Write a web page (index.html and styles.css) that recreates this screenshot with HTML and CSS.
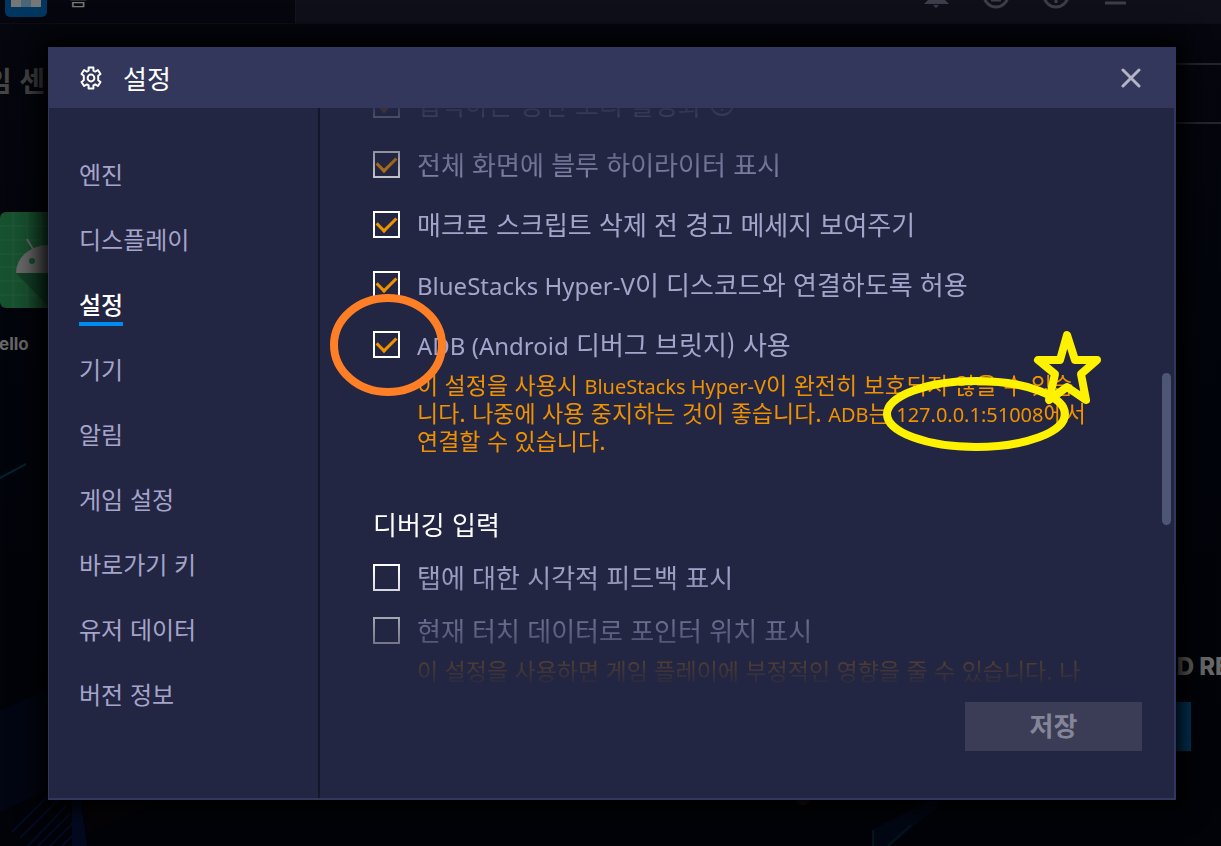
FILE: index.html
```html
<!DOCTYPE html>
<html lang="ko">
<head>
  <meta charset="UTF-8"/>
  <meta name="viewport" content="width=device-width, initial-scale=1.0"/>
  <title>설정</title>
  <link rel="stylesheet" href="styles.css">
</head>
<body>
  <!-- dimmed home screen -->
  <div class="home">
    <svg class="wallpaper" aria-hidden="true">
      <path d="M0 710 L48 690 V790 L0 812 Z" fill="#020613"/>
      <path d="M0 478 L26 464" stroke="#04222c" stroke-width="2"/>
      <path d="M12 832 L48 796 M20 838 L58 800 M28 846 L66 806 M38 846 L70 814 M50 846 L73 823 M62 846 L74 834" stroke="#020b24" stroke-width="2"/>
      <path d="M72 800 H81 L87 846 H72 Z" fill="#030a20"/>
      <path d="M81 800 H160 L87 834 Z" fill="#050307"/>
      <circle cx="803" cy="797" r="8" fill="#1c1211"/>
      <path d="M872 846 V830 L930 800 H946 L890 846 Z" fill="#020714"/>
      <path d="M888 846 L911 825 M873 846 V830" stroke="#03151f" stroke-width="2" fill="none"/>
    </svg>

    <header class="topbar">
      <div class="tab">
        <svg class="tab-icon" width="42" height="17" aria-hidden="true">
          <rect x="0" y="-20" width="42" height="37" rx="5" fill="#00365f"/>
          <rect x="6" y="-4" width="30" height="11" fill="#777"/>
          <rect x="16" y="-4" width="10" height="11" fill="#4a6478"/>
        </svg>
        <span>홈</span>
      </div>
      <svg class="top-icons" width="206" height="12" aria-hidden="true">
        <path d="M0 4 L4 0 H21 L25 4 Z M9 5 H15 L12 8 Z" fill="#3d3d49"/>
        <g fill="none" stroke="#3d3d49" stroke-width="3">
          <circle cx="72" cy="-5" r="12"/>
          <path d="M67 0 H77"/>
          <circle cx="132" cy="-5" r="12"/>
          <path d="M132 -1 V3"/>
          <path d="M181 3 H202"/>
        </g>
      </svg>
    </header>

    <div class="home-main">
      <div class="apps">
        <h2>임 센</h2>
        <svg class="app-icon" width="96" height="96" viewBox="0 0 96 96" aria-hidden="true">
          <rect width="96" height="96" rx="6" fill="#17522f"/>
          <path d="M0 14 H96 M0 28 H96 M0 42 H96 M0 55 H96 M0 69 H96 M0 83 H96 M13 0 V96 M27 0 V96 M41 0 V96 M55 0 V96" stroke="#25593a" fill="none"/>
          <path d="M16 61 L50 96 H96 V61 Z" fill="#123f27"/>
          <path d="M16 61 A32 28 0 0 1 80 61 Z" fill="#686868"/>
          <path d="M27 27 L33 37" stroke="#686868" stroke-width="2"/>
          <circle cx="32" cy="49" r="3" fill="#17522f"/>
        </svg>
        <p>ello</p>
      </div>
      <div class="promo">
        <div class="search-box"></div>
        <h3>ED RE</h3>
        <div class="promo-bar"></div>
      </div>
    </div>
  </div>

  <div class="overlay">
    <section class="dialog" role="dialog" aria-labelledby="dialog-title">
      <header class="dialog-header">
        <svg width="24" height="24" viewBox="0 0 24 24" fill="none" stroke="#fff" stroke-width="2" stroke-linejoin="round" aria-hidden="true">
          <path d="M9.6 1.6h4.8v3l1.8 1 2.7-1.6 2.6 4-2.3 1.7v4.6l2.3 1.7-2.6 4-2.7-1.6-1.8 1v3H9.6v-3l-1.8-1L5.1 20l-2.6-4 2.3-1.7V9.7L2.5 8l2.6-4 2.7 1.6 1.8-1z"/>
          <circle cx="12" cy="12" r="3.4"/>
        </svg>
        <h1 id="dialog-title">설정</h1>
        <button class="close-btn" aria-label="닫기">
          <svg width="20" height="20" viewBox="0 0 20 20" stroke="#b4b4c6" stroke-width="3" stroke-linecap="round" aria-hidden="true">
            <path d="M2 2 L18 18 M18 2 L2 18"/>
          </svg>
        </button>
      </header>

      <div class="dialog-body">
        <nav class="sidebar">
          <a href="#">엔진</a>
          <a href="#">디스플레이</a>
          <a href="#" class="active">설정</a>
          <a href="#">기기</a>
          <a href="#">알림</a>
          <a href="#">게임 설정</a>
          <a href="#">바로가기 키</a>
          <a href="#">유저 데이터</a>
          <a href="#">버전 정보</a>
        </nav>

        <div class="content">
          <div class="scroll-area">
            <form class="options">
              <div class="group">
                <label class="option">
                  <input type="checkbox" checked>
                  <span>입력하는 동안 소리 활성화</span>
                  <svg class="info" width="24" height="24" viewBox="0 0 24 24" fill="none" stroke="currentColor" stroke-width="2" aria-hidden="true">
                    <circle cx="12" cy="12" r="11"/>
                    <path d="M12 5v9M12 17v2"/>
                  </svg>
                </label>
                <label class="option"><input type="checkbox" checked><span>전체 화면에 블루 하이라이터 표시</span></label>
                <label class="option"><input type="checkbox" checked><span>매크로 스크립트 삭제 전 경고 메세지 보여주기</span></label>
                <label class="option"><input type="checkbox" checked><span><span class="en">BlueStacks Hyper-V</span>이 디스코드와 연결하도록 허용</span></label>
                <label class="option"><input type="checkbox" checked><span><span class="en">ADB (Android</span> 디버그 브릿지) 사용</span></label>
              </div>
              <p class="note">이 설정을 사용시 <span class="en">BlueStacks Hyper-V</span>이 완전히 보호되지 않을 수 있습<br>니다. 나중에 사용 중지하는 것이 좋습니다. <span class="en">ADB</span>는 <span class="en">127.0.0.1:51008</span>에서<br>연결할 수 있습니다.</p>

              <h2>디버깅 입력</h2>
              <div class="group debug">
                <label class="option"><input type="checkbox"><span>탭에 대한 시각적 피드백 표시</span></label>
                <label class="option"><input type="checkbox"><span>현재 터치 데이터로 포인터 위치 표시</span></label>
              </div>
              <p class="note">이 설정을 사용하면 게임 플레이에 부정적인 영향을 줄 수 있습니다. 나</p>
            </form>
            <div class="scrollbar"><div class="thumb"></div></div>
          </div>
          <footer class="dialog-footer">
            <button class="save-btn" disabled>저장</button>
          </footer>
        </div>
      </div>
    </section>
  </div>

  <!-- hand-drawn marks -->
  <svg class="marks" fill="none" stroke-width="8" stroke-linejoin="round" aria-hidden="true">
    <ellipse cx="388" cy="345" rx="54" ry="47" stroke="#ff7f27"/>
    <ellipse cx="976" cy="414" rx="89" ry="33" stroke="#fff200"/>
    <path d="M1067 335 L1075 360 H1097 L1081 374 L1086 400 L1067 387 L1049 400 L1055 374 L1038 360 H1060 Z" stroke="#fff200"/>
  </svg>
</body>
</html>
```
FILE: styles.css
```css
* {
  box-sizing: border-box;
}

body {
  margin: 0;
  min-height: 100vh;
  position: relative;
  overflow: hidden;
  background: #020308;
  font-family: "Noto Sans CJK KR", "Noto Sans", sans-serif;
}

h1, h2, h3, p {
  margin: 0;
}

/* home screen behind the dialog */
.home {
  position: absolute;
  inset: 0;
  overflow: hidden;
  background: linear-gradient(#05060e, #02040b 50%, #020308);
}

.wallpaper {
  position: absolute;
  width: 100%;
  height: 100%;
}

.topbar {
  height: 24px;
  display: flex;
  justify-content: space-between;
  background: #0f0f1a;
  border-bottom: 1px solid #0d0d16;
}

.tab {
  width: 296px;
  display: flex;
  gap: 22px;
  padding-left: 5px;
  background: #05060e;
  border-right: 1px solid #14141f;
  color: #777;
  font-size: 20px;
  line-height: 20px;
}

.tab span {
  margin-top: -12px;
}

.top-icons {
  margin-right: 91px;
}

.home-main {
  position: relative;
  display: flex;
  justify-content: space-between;
}

.apps {
  margin-left: -14px;
  padding-top: 36px;
  color: #454545;
}

.apps h2 {
  font-size: 28px;
  line-height: 40px;
}

.app-icon {
  display: block;
  margin: 112px 0 0 14px;
}

.apps p {
  margin: 26px 0 0 13px;
  color: #686868;
  font-family: Inter, sans-serif;
  font-size: 17px;
  font-weight: 700;
  line-height: 20px;
}

.promo {
  width: 61px;
  padding-top: 39px;
}

.search-box {
  height: 61px;
  border-top: 2px solid #24252e;
  border-bottom: 2px solid #24252e;
}

.promo h3 {
  margin-top: 529px;
  padding-left: 2px;
  color: #686868;
  font-family: Inter, sans-serif;
  font-size: 24px;
  font-weight: 800;
  line-height: 28px;
  white-space: nowrap;
}

.promo-bar {
  width: 31px;
  height: 49px;
  margin-top: 21px;
  background: #003a63;
}

/* settings dialog */
.overlay {
  position: relative;
  display: flex;
  min-height: 100vh;
  padding: 47px 45px 46px 48px;
}

.dialog {
  flex: 1;
  display: flex;
  flex-direction: column;
  background: #232642;
  border: solid #34375c;
  border-width: 0 2px 2px 1px;
  box-shadow: 0 0 24px 8px #000;
}

.dialog-header {
  display: flex;
  align-items: center;
  height: 61px;
  padding: 0 30px;
  background: #34375c;
}

.dialog-header h1 {
  margin-left: 20px;
  color: #fff;
  font-size: 26px;
  font-weight: 400;
  line-height: 34px;
}

.close-btn {
  display: flex;
  margin-left: auto;
  padding: 3px;
  background: none;
  border: none;
  cursor: pointer;
}

.dialog-body {
  flex: 1;
  display: flex;
}

.sidebar {
  width: 271px;
  display: flex;
  flex-direction: column;
  align-items: flex-start;
  gap: 29px;
  padding: 48px 30px;
  border-right: 2px solid #14162b;
}

.sidebar a {
  color: #a5a4cb;
  font-size: 24px;
  line-height: 36px;
  text-decoration: none;
}

.sidebar a.active {
  color: #fff;
  font-weight: 500;
  box-shadow: 0 4px #008bf0;
}

.content {
  flex: 1;
  display: flex;
  flex-direction: column;
}

.scroll-area {
  display: flex;
  height: 582px;
  overflow: hidden;
}

.options {
  flex: 1;
  padding-left: 53px;
  mask-image: linear-gradient(rgba(0, 0, 0, 0.1), #000 100px, #000 460px, transparent 580px);
}

.group {
  display: flex;
  flex-direction: column;
  gap: 32px;
  margin-top: -18px;
}

.group.debug {
  gap: 25px;
  margin-top: 21px;
}

.option {
  display: flex;
  align-items: center;
  gap: 17px;
  height: 28px;
  color: #a5a4cb;
  font-size: 26px;
  line-height: 28px;
  white-space: nowrap;
}

/* latin text runs a size smaller than the hangul */
.en {
  font-family: "Noto Sans", sans-serif;
  line-height: 20px;
}

.option .en {
  font-size: 24px;
}

.option input {
  appearance: none;
  display: grid;
  place-content: center;
  width: 27px;
  height: 27px;
  margin: 0;
  border: 2px solid #fff;
}

.option input:checked::after {
  content: "";
  width: 16px;
  height: 9px;
  margin-bottom: 5px;
  border: solid #f09200;
  border-width: 0 0 3px 3px;
  transform: rotate(-45deg);
}

.info {
  margin-left: -9px;
}

.note {
  padding: 12px 0 0 44px;
  color: #f09200;
  font-size: 23px;
  line-height: 28px;
  white-space: nowrap;
}

.note .en {
  font-size: 20px;
}

.options h2 {
  margin-top: 52px;
  color: #fff;
  font-size: 26px;
  font-weight: 400;
  line-height: 36px;
}

.scrollbar {
  width: 12px;
  padding-top: 265px;
}

.thumb {
  width: 9px;
  height: 152px;
  border-radius: 5px;
  background: #4e5676;
}

.dialog-footer {
  display: flex;
  justify-content: flex-end;
  padding: 12px 32px 47px;
}

.save-btn {
  width: 177px;
  height: 49px;
  padding: 0 0 4px;
  border: none;
  background: #3b3d56;
  color: #85859a;
  font-family: inherit;
  font-size: 26px;
  font-weight: 700;
}

.marks {
  position: absolute;
  top: 0;
  left: 0;
  width: 100%;
  height: 100%;
  pointer-events: none;
}
```
